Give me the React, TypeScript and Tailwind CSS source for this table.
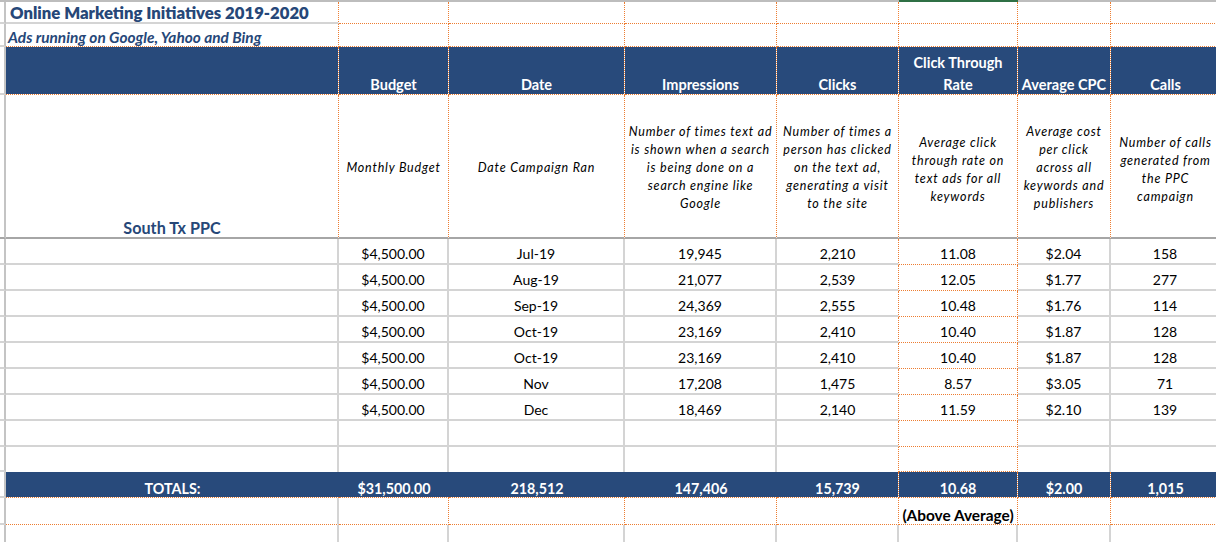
import clsx from "clsx";

const GRID = "grid grid-cols-[6px_333px_110px_176px_152px_122px_119px_93px_110px]";

// borders: right / bottom, gray solid or orange dotted
const rG = "border-r-2 border-r-[#d4d4d4]";
const rS = "border-r-2 border-r-[#c4c4c4]";
const rO = "border-r [border-right-style:dotted] border-r-[#ed7d31]";
const bG = "border-b-2 border-b-[#d4d4d4]";
const bO = "border-b [border-bottom-style:dotted] border-b-[#ed7d31]";
const bD = "border-b-2 border-b-[#a6a6a6]";
const blue = "bg-[#284a7b] bg-clip-padding text-white font-bold";

const headers = [
  ["Budget"],
  ["Date"],
  ["Impressions"],
  ["Clicks"],
  ["Click Through", "Rate"],
  ["Average CPC"],
  ["Calls"],
];

const descriptions = [
  { lines: ["Monthly Budget"], pt: "pt-[4px]" },
  { lines: ["Date Campaign Ran"], pt: "pt-[4px]" },
  { lines: ["Number of times text ad", "is shown when a search", "is being done on a", "search engine like", "Google"], pt: "pt-[4px]" },
  { lines: ["Number of times a", "person has clicked", "on the text ad,", "generating a visit", "to the site"], pt: "pt-[4px]" },
  { lines: ["Average click", "through rate on", "text ads for all", "keywords"], pt: "pt-[8px]" },
  { lines: ["Average cost", "per click", "across all", "keywords and", "publishers"], pt: "pt-[4px]" },
  { lines: ["Number of calls", "generated from", "the PPC", "campaign"], pt: "pt-[8px]" },
];

const rows = [
  ["$4,500.00", "Jul-19", "19,945", "2,210", "11.08", "$2.04", "158"],
  ["$4,500.00", "Aug-19", "21,077", "2,539", "12.05", "$1.77", "277"],
  ["$4,500.00", "Sep-19", "24,369", "2,555", "10.48", "$1.76", "114"],
  ["$4,500.00", "Oct-19", "23,169", "2,410", "10.40", "$1.87", "128"],
  ["$4,500.00", "Oct-19", "23,169", "2,410", "10.40", "$1.87", "128"],
  ["$4,500.00", "Nov", "17,208", "1,475", "8.57", "$3.05", "71"],
  ["$4,500.00", "Dec", "18,469", "2,140", "11.59", "$2.10", "139"],
  ["", "", "", "", "", "", ""],
];

const totals = ["$31,500.00", "218,512", "147,406", "15,739", "10.68", "$2.00", "1,015"];

// borders of the value columns (Budget .. Calls) in a data row
const dataBorders = [
  [rG, bG, "pb-[1px]"],
  [rG, bG, "pb-[1px]"],
  [rG, bG, "pb-[1px]"],
  [rO, bG, "pb-[1px]"],
  [rO, bO, "pb-[2px]"],
  [rG, bG, "pb-[1px]"],
  [rG, bG, "pb-[1px]"],
];

const App = () => (
  <div className="w-[1216px] h-[542px] overflow-hidden bg-white text-black [font-family:Lato,'Open_Sans',sans-serif]">
    {/* column header strip */}
    <div className={clsx(GRID, "h-[2px] bg-[#bdbdbd]")}>
      <div />
      <div />
      <div />
      <div />
      <div />
      <div />
      <div className="bg-[#2f7045]" />
    </div>

    {/* title */}
    <div className={clsx(GRID, "h-[22px]")}>
      <div className={clsx(rS, bG)} />
      <div className={clsx(rO, bG, "flex items-end pl-1 text-[16.7px] leading-[18px] font-extrabold text-[#264778] whitespace-nowrap")}>
        Online Marketing Initiatives 2019-2020
      </div>
      {headers.map((_, i) => (
        <div key={i} className={clsx(rO, bO)} />
      ))}
    </div>

    {/* subtitle */}
    <div className={clsx(GRID, "h-[23px]")}>
      <div className={clsx(rS, bG)} />
      <div className={clsx(rO, bO, "flex items-end pl-[2px] text-[15.4px] leading-[18px] font-bold italic text-[#264778] whitespace-nowrap")}>
        Ads running on Google, Yahoo and Bing
      </div>
      {headers.map((_, i) => (
        <div key={i} className={clsx(rO, bO)} />
      ))}
    </div>

    {/* column headers */}
    <div className={clsx(GRID, "h-[48px]")}>
      <div className={clsx(rS, bG)} />
      <div className={clsx(rO, bO, blue)} />
      {headers.map((lines, i) => (
        <div
          key={i}
          className={clsx(rO, bO, blue, "flex flex-col items-center justify-end text-[14.5px] leading-[22px] whitespace-nowrap")}
        >
          <div className="flex flex-col items-center -mb-[2px]">
            {lines.map((l) => (
              <span key={l}>{l}</span>
            ))}
          </div>
        </div>
      ))}
    </div>

    {/* descriptions */}
    <div className={clsx(GRID, "h-[144px]")}>
      <div className={clsx(rS, bD)} />
      <div className={clsx(rO, bD, "flex items-end justify-center text-[16.2px] leading-[18px] font-bold text-[#264778]")}>
        South Tx PPC
      </div>
      {descriptions.map((d, i) => (
        <div
          key={i}
          className={clsx(
            rO,
            bD,
            d.pt,
            "flex flex-col items-center justify-center text-[12.5px] leading-[18px] italic tracking-[0.8px] whitespace-nowrap"
          )}
        >
          {d.lines.map((l) => (
            <span key={l}>{l}</span>
          ))}
        </div>
      ))}
    </div>

    {/* data */}
    {rows.map((row, r) => (
      <div key={r} className={clsx(GRID, "h-[26px]")}>
        <div className={clsx(rS, bG)} />
        <div className={clsx(rG, bG)} />
        {row.map((v, i) => (
          <div
            key={i}
            className={clsx(dataBorders[i], "flex items-end justify-center text-[14px] leading-4")}
          >
            {v}
          </div>
        ))}
      </div>
    ))}

    {/* spacer row above totals */}
    <div className={clsx(GRID, "h-[25px]")}>
      <div className={clsx(rS, bG)} />
      <div className={rG} />
      <div className={rG} />
      <div className={rG} />
      <div className={rG} />
      <div className={rO} />
      <div className={clsx(rO, bO)} />
      <div className={rG} />
      <div className={rG} />
    </div>

    {/* totals */}
    <div className={clsx(GRID, "h-[26px]")}>
      <div className={clsx(rS, bG)} />
      <div className={clsx(bO, blue, "flex items-end justify-center text-[14.3px] leading-4")}>TOTALS:</div>
      {totals.map((v, i) => (
        <div
          key={i}
          className={clsx(bO, blue, i >= 3 && rO, "flex items-end justify-center text-[14.3px] leading-4")}
        >
          {v}
        </div>
      ))}
    </div>

    {/* note row */}
    <div className={clsx(GRID, "h-[27px]")}>
      <div className={clsx(rS, bG)} />
      <div className={clsx(rG, bO)} />
      <div className={clsx(rO, bO)} />
      <div className={clsx(rO, bO)} />
      <div className={clsx(rO, bO)} />
      <div className={clsx(rO, bO)} />
      <div className={clsx(rO, bO, "flex items-end justify-center text-[15.4px] leading-[18px] font-bold whitespace-nowrap")}>
        (Above Average)
      </div>
      <div className={clsx(rO, bO)} />
      <div className={clsx(rO, bO)} />
    </div>

    {/* last visible row */}
    <div className={clsx(GRID, "h-[26px]")}>
      <div className={clsx(rS, bG)} />
      {headers.concat([[""]]).map((_, i) => (
        <div key={i} className={clsx(rG, bG)} />
      ))}
    </div>
  </div>
);

export default App;
